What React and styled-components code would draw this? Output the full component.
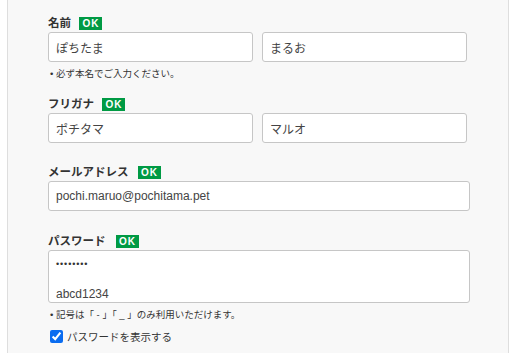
import React from 'react';
import styled, { createGlobalStyle } from 'styled-components';

const GlobalStyle = createGlobalStyle`
  html, body {
    margin: 0;
    background: #fff;
  }
  body {
    font-family: "Liberation Sans", "Noto Sans CJK JP", sans-serif;
    color: #333;
  }
`;

const Panel = styled.div`
  margin: 0 7px;
  min-height: 353px;
  box-sizing: border-box;
  background: #f8f8f8;
  border-left: 1px solid #dedede;
  border-right: 1px solid #dedede;
  padding: 16px 0 0 40px;
`;

const Field = styled.div`
  margin-bottom: ${(p) => p.$gap}px;
`;

const LabelRow = styled.div`
  display: flex;
  align-items: center;
  height: 14px;
  margin-bottom: 2px;
`;

const Label = styled.span`
  font-size: 11.5px;
  font-weight: bold;
  color: #333;
  line-height: 14px;
`;

const Badge = styled.span`
  display: inline-flex;
  align-items: center;
  justify-content: center;
  margin-left: ${(p) => p.$offset}px;
  width: 23px;
  height: 13px;
  background: #009a44;
  color: #fff;
  font-size: 10px;
  font-weight: bold;
  letter-spacing: 1px;
  padding-left: 1px;
  box-sizing: border-box;
`;

const Pair = styled.div`
  display: grid;
  grid-template-columns: 205px 205px;
  gap: 9px;
`;

const Input = styled.div`
  box-sizing: border-box;
  width: ${(p) => p.$width || 205}px;
  height: 30px;
  border: 1px solid #c6c6c6;
  border-radius: 3px;
  background: #fff;
  padding: 0 7px;
  display: flex;
  align-items: center;
  font-size: 12px;
  color: #444;
`;

const PassBox = styled.div`
  box-sizing: border-box;
  width: 422px;
  height: 53px;
  border: 1px solid #c6c6c6;
  border-radius: 3px;
  background: #fff;
  padding: 6px 7px 0;
  font-size: 12px;
  color: #444;
`;

const Dots = styled.div`
  font-size: 9px;
  letter-spacing: 0.9px;
  line-height: 14px;
  color: #333;
`;

const PassText = styled.div`
  margin-top: 15px;
  line-height: 16px;
`;

const Note = styled.p`
  margin: 6px 0 0 2px;
  font-size: 9.5px;
  line-height: 12px;
  color: #333;
`;

const Check = styled.label`
  display: flex;
  align-items: center;
  margin-top: 8px;
  font-size: 10.5px;
  color: #333;

  input {
    width: 13px;
    height: 13px;
    margin: 0 4px 0 2px;
    accent-color: #0a6cf0;
  }
`;

const App = () => (
  <>
    <GlobalStyle />
    <Panel>
      <Field $gap={17}>
        <LabelRow>
          <Label>名前</Label>
          <Badge $offset={8}>OK</Badge>
        </LabelRow>
        <Pair>
          <Input>ぽちたま</Input>
          <Input>まるお</Input>
        </Pair>
        <Note>• 必ず本名でご入力ください。</Note>
      </Field>
      <Field $gap={22}>
        <LabelRow>
          <Label>フリガナ</Label>
          <Badge $offset={8}>OK</Badge>
        </LabelRow>
        <Pair>
          <Input>ポチタマ</Input>
          <Input>マルオ</Input>
        </Pair>
      </Field>
      <Field $gap={23}>
        <LabelRow>
          <Label>メールアドレス</Label>
          <Badge $offset={9}>OK</Badge>
        </LabelRow>
        <Input $width={422}>pochi.maruo@pochitama.pet</Input>
      </Field>
      <Field $gap={0}>
        <LabelRow>
          <Label>パスワード</Label>
          <Badge $offset={10}>OK</Badge>
        </LabelRow>
        <PassBox>
          <Dots>••••••••</Dots>
          <PassText>abcd1234</PassText>
        </PassBox>
        <Note>• 記号は「 - 」「 _ 」のみ利用いただけます。</Note>
        <Check>
          <input type="checkbox" defaultChecked />
          パスワードを表示する
        </Check>
      </Field>
    </Panel>
  </>
);

export default App;
